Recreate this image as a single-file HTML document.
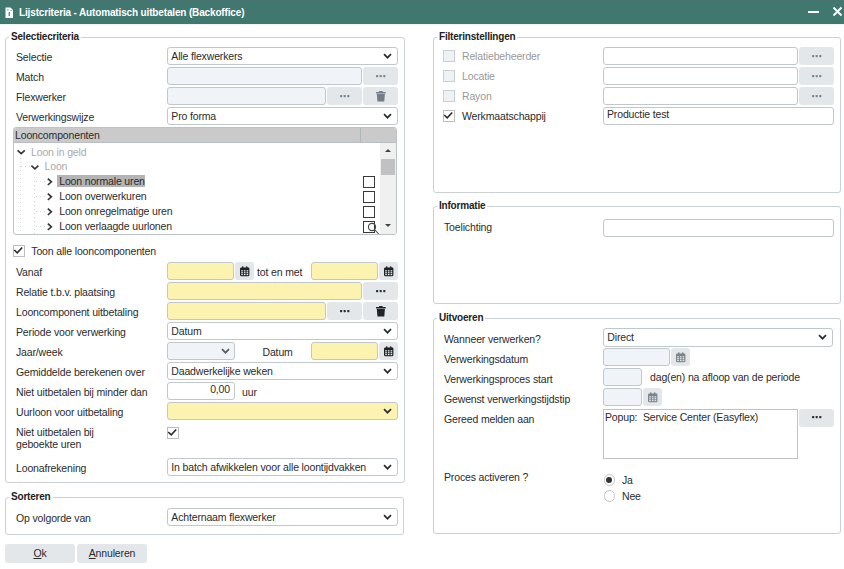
<!DOCTYPE html>
<html><head><meta charset="utf-8">
<style>
*{box-sizing:border-box;margin:0;padding:0}
html,body{width:844px;height:569px;overflow:hidden;background:#fff}
body{position:relative;font-family:"Liberation Sans",sans-serif;font-size:10.5px;color:#2b2b2b;letter-spacing:-0.15px}
.a{position:absolute}
#title{left:0;top:0;width:844px;height:24px;background:#40776f;color:#fff;font-weight:bold;font-size:10px;letter-spacing:-0.15px}
.fs{position:absolute;border:1px solid #c9d0d6;border-radius:3px}
.lg{position:absolute;background:#fff;font-weight:bold;font-size:10px;letter-spacing:-0.2px;padding:0 2px;line-height:12px;color:#222}
.lb{position:absolute;line-height:12px;white-space:nowrap}
.in{position:absolute;border:1px solid #c0c7cd;border-radius:3px;background:#fff;height:18px;line-height:16px;padding-left:3.3px;white-space:nowrap;overflow:hidden}
.dis{background:#f0f4f8}
.yel{background:#fdf3b0}
.bt{position:absolute;background:#e3e7ea;border-radius:3px;height:18px}
.chev{position:absolute;right:5px;top:5px}
.ic{position:absolute;left:50%;top:50%}
.cb{position:absolute;width:12px;height:12px;border:1px solid #3a3a3a;background:#fff}
.dcb{border-color:#c9ced3;background:#eef2f5}
</style></head><body>
<div id="title" class="a">
  <div class="a" style="left:0;top:0;width:844px;height:1px;background:#4a7470"></div>
  <svg class="a" style="left:0;top:0" width="20" height="24" viewBox="0 0 20 24"><path d="M5.5 7.5H10.5L13 10V18H5.5Z" fill="#fff"/><rect x="7.2" y="9" width="1.3" height="1.6" fill="#8fb0aa"/><rect x="10.3" y="10" width="2" height="0.8" fill="#8fb0aa"/><path d="M9.3 12V16" stroke="#5f8d86" stroke-width="1.4"/></svg>
  <div class="a" style="left:19px;top:7px;line-height:12px">Lijstcriteria - Automatisch uitbetalen (Backoffice)</div>
  <div class="a" style="left:808px;top:10.5px;width:11px;height:2.2px;background:#fff"></div>
  <svg class="a" style="left:832px;top:6px" width="11" height="11" viewBox="0 0 11 11"><path d="M1.5 1.5L9.5 9.5M9.5 1.5L1.5 9.5" stroke="#fff" stroke-width="1.9"/></svg>
</div>

<div class="a" style="left:0;top:24px;width:844px;height:1px;background:#f2f4f4"></div>
<!-- Selectiecriteria -->
<div class="fs" style="left:5px;top:37px;width:400px;height:445.5px"></div>
<div class="lg" style="left:9px;top:31px">Selectiecriteria</div>

<div class="lb" style="left:16px;top:51px">Selectie</div>
<div class="in sel" style="left:167px;top:47px;width:231px">Alle flexwerkers<svg class="chev" width="9" height="7"><path d="M1 1.2L4.5 4.7L8 1.2" stroke="#2a2f33" stroke-width="1.7" fill="none"/></svg></div>

<div class="lb" style="left:16px;top:71px">Match</div>
<div class="in dis" style="left:167px;top:67px;width:195px"></div>
<div class="bt" style="left:363px;top:67px;width:35px"><svg class="ic" style="margin:-1.2px 0 0 -4.7px" width="10" height="3"><rect x="0" y="0" width="2.2" height="2.2" rx="0.6" fill="#7d868d"/><rect x="3.6" y="0" width="2.2" height="2.2" rx="0.6" fill="#7d868d"/><rect x="7.2" y="0" width="2.2" height="2.2" rx="0.6" fill="#7d868d"/></svg></div>

<div class="lb" style="left:16px;top:91px">Flexwerker</div>
<div class="in dis" style="left:167px;top:87px;width:159px"></div>
<div class="bt" style="left:327px;top:87px;width:35px"><svg class="ic" style="margin:-1.2px 0 0 -4.7px" width="10" height="3"><rect x="0" y="0" width="2.2" height="2.2" rx="0.6" fill="#7d868d"/><rect x="3.6" y="0" width="2.2" height="2.2" rx="0.6" fill="#7d868d"/><rect x="7.2" y="0" width="2.2" height="2.2" rx="0.6" fill="#7d868d"/></svg></div>
<div class="bt" style="left:363px;top:87px;width:35px"><svg class="ic" style="margin:-5.2px 0 0 -4.8px" width="10" height="11"><rect x="0" y="0.9" width="9.7" height="1.7" rx="0.4" fill="#737d87"/><rect x="3" y="0" width="3.7" height="1.5" rx="0.5" fill="#737d87"/><path d="M0.8 3.1H8.9L8.3 10.2Q8.2 10.6 7.8 10.6H1.9Q1.5 10.6 1.4 10.2Z" fill="#737d87"/></svg></div>

<div class="lb" style="left:16px;top:111px">Verwerkingswijze</div>
<div class="in sel" style="left:167px;top:107px;width:231px">Pro forma<svg class="chev" width="9" height="7"><path d="M1 1.2L4.5 4.7L8 1.2" stroke="#2a2f33" stroke-width="1.7" fill="none"/></svg></div>


<!-- grid -->
<div class="a" style="left:13px;top:127px;width:384px;height:108px;border:1px solid #bcc2c7;border-radius:3px;overflow:hidden;background:#fff">
  <div class="a" style="left:0;top:0;width:382px;height:15px;background:#cacaca;border-bottom:1px solid #b9bec2"></div>
  <div class="a" style="left:346px;top:0;width:1px;height:14px;background:#b0b5ba"></div>
  <div class="lb" style="left:1px;top:1px">Looncomponenten</div>
  <!-- scrollbar -->
  <div class="a" style="left:366px;top:15px;width:16px;height:91px;background:#f0f0f0"></div>
  <div class="a" style="left:370.5px;top:21px;width:0;height:0;border-left:3px solid transparent;border-right:3px solid transparent;border-bottom:3.5px solid #444"></div>
  <div class="a" style="left:367px;top:31px;width:14px;height:16px;background:#c1c1c1"></div>
  <div class="a" style="left:370.5px;top:96px;width:0;height:0;border-left:3px solid transparent;border-right:3px solid transparent;border-top:3.5px solid #444"></div>
  <!-- tree -->
  <div class="lb" style="left:17px;top:17.5px;color:#aaa">Loon in geld</div>
  <div class="lb" style="left:30.5px;top:32px;color:#aaa">Loon</div>
  <div class="a" style="left:43px;top:47px;width:88px;height:12px;background:#b4b4b4"></div>
  <div class="lb" style="left:45.2px;top:47px">Loon normale uren</div>
  <div class="lb" style="left:45.2px;top:62px">Loon overwerkuren</div>
  <div class="lb" style="left:45.2px;top:77px">Loon onregelmatige uren</div>
  <div class="lb" style="left:45.2px;top:92px">Loon verlaagde uurlonen</div>
  <svg class="a" style="left:0;top:0" width="360" height="108">
    <g stroke="#d2d2d2" stroke-width="1" stroke-dasharray="1 3" fill="none">
      <path d="M6.5 30V108"/><path d="M7 38.5H17"/>
      <path d="M20.5 45V108"/>
      <path d="M22 53.5H31M22 68.5H31M22 83.5H31M22 98.5H31"/>
    </g>
    <g stroke="#333" stroke-width="1.6" fill="none">
      <path d="M3.6 22.4L7.2 25.6L10.8 22.4"/>
      <path d="M17.4 37.6L20.9 40.8L24.4 37.6"/>
      <path d="M33.8 50.6L37.4 53.8L33.8 57M33.8 65.6L37.4 68.8L33.8 72M33.8 80.6L37.4 83.8L33.8 87M33.8 95.6L37.4 98.8L33.8 102"/>
    </g>
  </svg>
  <div class="cb" style="left:349px;top:47.5px"></div>
  <div class="cb" style="left:349px;top:62.5px"></div>
  <div class="cb" style="left:349px;top:78px"></div>
  <div class="cb" style="left:349px;top:93px"></div>
  <svg class="a" style="left:350px;top:90px" width="20" height="18"><circle cx="8" cy="9" r="3.6" stroke="#444" stroke-width="1.1" fill="none"/><path d="M10.6 11.6L14.6 15.8" stroke="#555" stroke-width="1.1"/></svg>
</div>

<div class="cb" style="left:13px;top:245px;width:12px;height:12px;border-color:#bdbdbd"></div>
<svg class="a" style="left:13px;top:246px" width="11" height="9"><path d="M1.3 4L4.2 6.8L9.2 1.5" stroke="#2a2a2a" stroke-width="1.6" fill="none"/></svg>
<div class="lb" style="left:31.3px;top:245px">Toon alle looncomponenten</div>

<div class="lb" style="left:16px;top:266px">Vanaf</div>
<div class="in yel" style="left:167px;top:262px;width:67px"></div>
<div class="bt" style="left:235px;top:262px;width:19px"><svg class="ic" style="margin:-5px 0 0 -4.7px" width="10" height="11"><rect x="0" y="1.6" width="9.4" height="8.6" rx="1.2" fill="#1f2327"/><rect x="2" y="0.4" width="1.5" height="2.5" fill="#1f2327"/><rect x="5.9" y="0.4" width="1.5" height="2.5" fill="#1f2327"/><g fill="#e4e8eb"><rect x="1.2" y="4.2" width="1.6" height="1.3"/><rect x="3.9" y="4.2" width="1.6" height="1.3"/><rect x="6.6" y="4.2" width="1.6" height="1.3"/><rect x="1.2" y="6.1" width="1.6" height="1.3"/><rect x="3.9" y="6.1" width="1.6" height="1.3"/><rect x="6.6" y="6.1" width="1.6" height="1.3"/><rect x="1.2" y="8" width="1.6" height="1.2"/><rect x="3.9" y="8" width="1.6" height="1.2"/><rect x="6.6" y="8" width="1.6" height="1.2"/></g></svg></div>
<div class="lb" style="left:257px;top:266px">tot en met</div>
<div class="in yel" style="left:311px;top:262px;width:67px"></div>
<div class="bt" style="left:379px;top:262px;width:19px"><svg class="ic" style="margin:-5px 0 0 -4.7px" width="10" height="11"><rect x="0" y="1.6" width="9.4" height="8.6" rx="1.2" fill="#1f2327"/><rect x="2" y="0.4" width="1.5" height="2.5" fill="#1f2327"/><rect x="5.9" y="0.4" width="1.5" height="2.5" fill="#1f2327"/><g fill="#e4e8eb"><rect x="1.2" y="4.2" width="1.6" height="1.3"/><rect x="3.9" y="4.2" width="1.6" height="1.3"/><rect x="6.6" y="4.2" width="1.6" height="1.3"/><rect x="1.2" y="6.1" width="1.6" height="1.3"/><rect x="3.9" y="6.1" width="1.6" height="1.3"/><rect x="6.6" y="6.1" width="1.6" height="1.3"/><rect x="1.2" y="8" width="1.6" height="1.2"/><rect x="3.9" y="8" width="1.6" height="1.2"/><rect x="6.6" y="8" width="1.6" height="1.2"/></g></svg></div>

<div class="lb" style="left:16px;top:286px">Relatie t.b.v. plaatsing</div>
<div class="in yel" style="left:167px;top:282px;width:195px"></div>
<div class="bt" style="left:363px;top:282px;width:35px"><svg class="ic" style="margin:-1.2px 0 0 -4.7px" width="10" height="3"><rect x="0" y="0" width="2.2" height="2.2" rx="0.6" fill="#2b2f33"/><rect x="3.6" y="0" width="2.2" height="2.2" rx="0.6" fill="#2b2f33"/><rect x="7.2" y="0" width="2.2" height="2.2" rx="0.6" fill="#2b2f33"/></svg></div>

<div class="lb" style="left:16px;top:306px">Looncomponent uitbetaling</div>
<div class="in yel" style="left:167px;top:302px;width:159px"></div>
<div class="bt" style="left:327px;top:302px;width:35px"><svg class="ic" style="margin:-1.2px 0 0 -4.7px" width="10" height="3"><rect x="0" y="0" width="2.2" height="2.2" rx="0.6" fill="#2b2f33"/><rect x="3.6" y="0" width="2.2" height="2.2" rx="0.6" fill="#2b2f33"/><rect x="7.2" y="0" width="2.2" height="2.2" rx="0.6" fill="#2b2f33"/></svg></div>
<div class="bt" style="left:363px;top:302px;width:35px"><svg class="ic" style="margin:-5.2px 0 0 -4.8px" width="10" height="11"><rect x="0" y="0.9" width="9.7" height="1.7" rx="0.4" fill="#1f2429"/><rect x="3" y="0" width="3.7" height="1.5" rx="0.5" fill="#1f2429"/><path d="M0.8 3.1H8.9L8.3 10.2Q8.2 10.6 7.8 10.6H1.9Q1.5 10.6 1.4 10.2Z" fill="#1f2429"/></svg></div>

<div class="lb" style="left:16px;top:326px">Periode voor verwerking</div>
<div class="in sel" style="left:167px;top:322px;width:231px">Datum<svg class="chev" width="9" height="7"><path d="M1 1.2L4.5 4.7L8 1.2" stroke="#2a2f33" stroke-width="1.7" fill="none"/></svg></div>

<div class="lb" style="left:16px;top:346px">Jaar/week</div>
<div class="in dis sel lt" style="left:167px;top:342px;width:68px"><svg class="chev" style="right:4px;top:5.3px" width="9" height="7"><path d="M1 1.2L4.5 4.7L8 1.2" stroke="#555b60" stroke-width="1.7" fill="none"/></svg></div>
<div class="lb" style="left:262.5px;top:346px">Datum</div>
<div class="in yel" style="left:311px;top:342px;width:67px"></div>
<div class="bt" style="left:379px;top:342px;width:19px"><svg class="ic" style="margin:-5px 0 0 -4.7px" width="10" height="11"><rect x="0" y="1.6" width="9.4" height="8.6" rx="1.2" fill="#1f2327"/><rect x="2" y="0.4" width="1.5" height="2.5" fill="#1f2327"/><rect x="5.9" y="0.4" width="1.5" height="2.5" fill="#1f2327"/><g fill="#e4e8eb"><rect x="1.2" y="4.2" width="1.6" height="1.3"/><rect x="3.9" y="4.2" width="1.6" height="1.3"/><rect x="6.6" y="4.2" width="1.6" height="1.3"/><rect x="1.2" y="6.1" width="1.6" height="1.3"/><rect x="3.9" y="6.1" width="1.6" height="1.3"/><rect x="6.6" y="6.1" width="1.6" height="1.3"/><rect x="1.2" y="8" width="1.6" height="1.2"/><rect x="3.9" y="8" width="1.6" height="1.2"/><rect x="6.6" y="8" width="1.6" height="1.2"/></g></svg></div>

<div class="lb" style="left:16px;top:366px">Gemiddelde berekenen over</div>
<div class="in sel" style="left:167px;top:362px;width:231px">Daadwerkelijke weken<svg class="chev" width="9" height="7"><path d="M1 1.2L4.5 4.7L8 1.2" stroke="#2a2f33" stroke-width="1.7" fill="none"/></svg></div>

<div class="lb" style="left:16px;top:386px">Niet uitbetalen bij minder dan</div>
<div class="in" style="left:167px;top:382px;width:68px;text-align:right;padding-right:4px;line-height:13px">0,00</div>
<div class="lb" style="left:242px;top:385.5px">uur</div>

<div class="lb" style="left:16px;top:406px">Uurloon voor uitbetaling</div>
<div class="in yel sel" style="left:167px;top:402px;width:231px"><svg class="chev" width="9" height="7"><path d="M1 1.2L4.5 4.7L8 1.2" stroke="#2a2f33" stroke-width="1.7" fill="none"/></svg></div>

<div class="lb" style="left:16px;top:426px;line-height:12px">Niet uitbetalen bij<br>geboekte uren</div>
<div class="cb" style="left:167px;top:427px;width:12px;height:12px;border-color:#bdbdbd"></div>
<svg class="a" style="left:167px;top:428px" width="11" height="9"><path d="M1.3 4L4.2 6.8L9.2 1.5" stroke="#2a2a2a" stroke-width="1.6" fill="none"/></svg>

<div class="lb" style="left:16px;top:462px">Loonafrekening</div>
<div class="in sel" style="left:167px;top:458px;width:231px">In batch afwikkelen voor alle loontijdvakken<svg class="chev" width="9" height="7"><path d="M1 1.2L4.5 4.7L8 1.2" stroke="#2a2f33" stroke-width="1.7" fill="none"/></svg></div>

<!-- Sorteren -->
<div class="fs" style="left:5px;top:497px;width:399px;height:38px"></div>
<div class="lg" style="left:9px;top:491px">Sorteren</div>
<div class="lb" style="left:16px;top:512px">Op volgorde van</div>
<div class="in sel" style="left:167px;top:507.6px;width:231px">Achternaam flexwerker<svg class="chev" width="9" height="7"><path d="M1 1.2L4.5 4.7L8 1.2" stroke="#2a2f33" stroke-width="1.7" fill="none"/></svg></div>

<div class="bt" style="left:5px;top:544px;width:70px;height:19px;text-align:center;line-height:19px"><u>O</u>k</div>
<div class="bt" style="left:77px;top:544px;width:70px;height:19px;text-align:center;line-height:19px"><u>A</u>nnuleren</div>

<!-- Filterinstellingen -->
<div class="fs" style="left:433px;top:37px;width:408px;height:155.5px"></div>
<div class="lg" style="left:437px;top:31px">Filterinstellingen</div>
<div class="cb dcb" style="left:443px;top:50px"></div>
<div class="lb" style="left:462px;top:50px;color:#999">Relatiebeheerder</div>
<div class="in" style="left:603px;top:47px;width:195px"></div>
<div class="bt" style="left:799px;top:47px;width:34.5px"><svg class="ic" style="margin:-1.2px 0 0 -4.7px" width="10" height="3"><rect x="0" y="0" width="2.2" height="2.2" rx="0.6" fill="#7d868d"/><rect x="3.6" y="0" width="2.2" height="2.2" rx="0.6" fill="#7d868d"/><rect x="7.2" y="0" width="2.2" height="2.2" rx="0.6" fill="#7d868d"/></svg></div>
<div class="cb dcb" style="left:443px;top:70px"></div>
<div class="lb" style="left:462px;top:70px;color:#999">Locatie</div>
<div class="in" style="left:603px;top:67px;width:195px"></div>
<div class="bt" style="left:799px;top:67px;width:34.5px"><svg class="ic" style="margin:-1.2px 0 0 -4.7px" width="10" height="3"><rect x="0" y="0" width="2.2" height="2.2" rx="0.6" fill="#7d868d"/><rect x="3.6" y="0" width="2.2" height="2.2" rx="0.6" fill="#7d868d"/><rect x="7.2" y="0" width="2.2" height="2.2" rx="0.6" fill="#7d868d"/></svg></div>
<div class="cb dcb" style="left:443px;top:90px"></div>
<div class="lb" style="left:462px;top:90px;color:#999">Rayon</div>
<div class="in" style="left:603px;top:87px;width:195px"></div>
<div class="bt" style="left:799px;top:87px;width:34.5px"><svg class="ic" style="margin:-1.2px 0 0 -4.7px" width="10" height="3"><rect x="0" y="0" width="2.2" height="2.2" rx="0.6" fill="#7d868d"/><rect x="3.6" y="0" width="2.2" height="2.2" rx="0.6" fill="#7d868d"/><rect x="7.2" y="0" width="2.2" height="2.2" rx="0.6" fill="#7d868d"/></svg></div>
<div class="cb" style="left:443px;top:110px;border-color:#bdbdbd"></div>
<svg class="a" style="left:443px;top:111px" width="11" height="9"><path d="M1.3 4L4.2 6.8L9.2 1.5" stroke="#2a2a2a" stroke-width="1.6" fill="none"/></svg>
<div class="lb" style="left:462px;top:110px">Werkmaatschappij</div>
<div class="in" style="left:603px;top:107px;width:230.5px;line-height:13px;padding-left:3px">Productie test</div>

<!-- Informatie -->
<div class="fs" style="left:433px;top:206px;width:408px;height:98px"></div>
<div class="lg" style="left:437px;top:200px">Informatie</div>
<div class="lb" style="left:444px;top:220.5px">Toelichting</div>
<div class="in" style="left:603px;top:219px;width:230.5px"></div>

<!-- Uitvoeren -->
<div class="fs" style="left:433px;top:318px;width:408px;height:216px"></div>
<div class="lg" style="left:437px;top:312px">Uitvoeren</div>
<div class="lb" style="left:444px;top:333px">Wanneer verwerken?</div>
<div class="in sel" style="left:603px;top:328.3px;width:230px;height:18.5px">Direct<svg class="chev" width="9" height="7"><path d="M1 1.2L4.5 4.7L8 1.2" stroke="#2a2f33" stroke-width="1.7" fill="none"/></svg></div>
<div class="lb" style="left:444px;top:353px">Verwerkingsdatum</div>
<div class="in dis" style="left:603px;top:348.4px;width:67px"></div>
<div class="bt" style="left:671px;top:348.4px;width:18.5px"><svg class="ic" style="margin:-5px 0 0 -4.7px" width="10" height="11"><rect x="0" y="1.6" width="9.4" height="8.6" rx="1.2" fill="#7a848c"/><rect x="2" y="0.4" width="1.5" height="2.5" fill="#7a848c"/><rect x="5.9" y="0.4" width="1.5" height="2.5" fill="#7a848c"/><g fill="#e4e8eb"><rect x="1.2" y="4.2" width="1.6" height="1.3"/><rect x="3.9" y="4.2" width="1.6" height="1.3"/><rect x="6.6" y="4.2" width="1.6" height="1.3"/><rect x="1.2" y="6.1" width="1.6" height="1.3"/><rect x="3.9" y="6.1" width="1.6" height="1.3"/><rect x="6.6" y="6.1" width="1.6" height="1.3"/><rect x="1.2" y="8" width="1.6" height="1.2"/><rect x="3.9" y="8" width="1.6" height="1.2"/><rect x="6.6" y="8" width="1.6" height="1.2"/></g></svg></div>
<div class="lb" style="left:444px;top:373px">Verwerkingsproces start</div>
<div class="in dis" style="left:603px;top:368.4px;width:39px"></div>
<div class="lb" style="left:650px;top:371px">dag(en) na afloop van de periode</div>
<div class="lb" style="left:444px;top:393px">Gewenst verwerkingstijdstip</div>
<div class="in dis" style="left:603px;top:388.4px;width:39px"></div>
<div class="bt" style="left:643px;top:388.4px;width:18.5px"><svg class="ic" style="margin:-5px 0 0 -4.7px" width="10" height="11"><rect x="0" y="1.6" width="9.4" height="8.6" rx="1.2" fill="#7a848c"/><rect x="2" y="0.4" width="1.5" height="2.5" fill="#7a848c"/><rect x="5.9" y="0.4" width="1.5" height="2.5" fill="#7a848c"/><g fill="#e4e8eb"><rect x="1.2" y="4.2" width="1.6" height="1.3"/><rect x="3.9" y="4.2" width="1.6" height="1.3"/><rect x="6.6" y="4.2" width="1.6" height="1.3"/><rect x="1.2" y="6.1" width="1.6" height="1.3"/><rect x="3.9" y="6.1" width="1.6" height="1.3"/><rect x="6.6" y="6.1" width="1.6" height="1.3"/><rect x="1.2" y="8" width="1.6" height="1.2"/><rect x="3.9" y="8" width="1.6" height="1.2"/><rect x="6.6" y="8" width="1.6" height="1.2"/></g></svg></div>
<div class="lb" style="left:444px;top:413px">Gereed melden aan</div>
<div class="in" style="left:603px;top:408.5px;width:195px;height:50.5px;line-height:14px;padding-left:1px;border-radius:0;border-color:#c2c2c2">Popup:&nbsp; Service Center (Easyflex)</div>
<div class="bt" style="left:799px;top:408.5px;width:34.5px"><svg class="ic" style="margin:-1.2px 0 0 -4.7px" width="10" height="3"><rect x="0" y="0" width="2.2" height="2.2" rx="0.6" fill="#2b2f33"/><rect x="3.6" y="0" width="2.2" height="2.2" rx="0.6" fill="#2b2f33"/><rect x="7.2" y="0" width="2.2" height="2.2" rx="0.6" fill="#2b2f33"/></svg></div>
<div class="lb" style="left:444px;top:471px">Proces activeren ?</div>
<div class="a" style="left:603.5px;top:474.2px;width:11.5px;height:11.5px;border:1px solid #c4c4c4;border-radius:50%;background:#fff"></div>
<div class="a" style="left:606.1px;top:476.8px;width:6.3px;height:6.3px;border-radius:50%;background:#333"></div>
<div class="lb" style="left:622px;top:474px">Ja</div>
<div class="a" style="left:603.5px;top:490.2px;width:11.5px;height:11.5px;border:1px solid #c4c4c4;border-radius:50%;background:#fff"></div>
<div class="lb" style="left:622px;top:490px">Nee</div>
</body></html>
